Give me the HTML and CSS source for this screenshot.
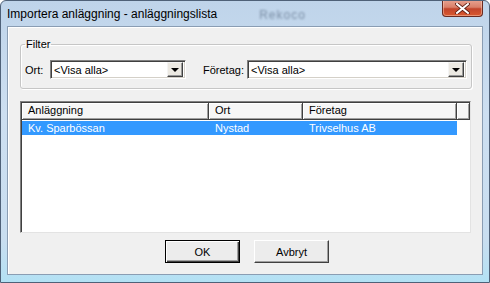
FILE: index.html
```html
<!DOCTYPE html>
<html>
<head>
    <title>Importera anläggning</title>
    <link rel="stylesheet" href="styles.css">
</head>
<body>
    <div class="window">
        <div class="titlebar">
            <span class="title">Importera anläggning - anläggningslista</span>
            <span class="ghost">Rekoco</span>
            <div class="close">
                <svg width="15" height="11" viewBox="0 0 15 11">
                    <path d="M2 1 L13 10 M13 1 L2 10" stroke="#5a1a10" stroke-width="3.6" stroke-linecap="square"/>
                    <path d="M2 1 L13 10 M13 1 L2 10" stroke="#fff" stroke-width="2" stroke-linecap="square"/>
                </svg>
            </div>
        </div>
        <div class="client">
            <fieldset class="filter">
                <legend>Filter</legend>
                <div class="filter-row">
                    <span class="lbl lbl-ort">Ort:</span>
                    <div class="combo combo-ort">
                        <span class="combo-text">&lt;Visa alla&gt;</span>
                        <span class="combo-btn"><span class="arrow"></span></span>
                    </div>
                    <span class="lbl lbl-foretag">Företag:</span>
                    <div class="combo combo-foretag">
                        <span class="combo-text">&lt;Visa alla&gt;</span>
                        <span class="combo-btn"><span class="arrow"></span></span>
                    </div>
                </div>
            </fieldset>
            <div class="list">
                <div class="list-head">
                    <div class="hcell col-1">Anläggning</div>
                    <div class="hcell col-2">Ort</div>
                    <div class="hcell col-3">Företag</div>
                    <div class="hcell col-fill"></div>
                </div>
                <div class="list-row selected">
                    <div class="cell col-1">Kv. Sparbössan</div>
                    <div class="cell col-2">Nystad</div>
                    <div class="cell col-3">Trivselhus AB</div>
                </div>
            </div>
            <div class="buttons">
                <div class="btn btn-default">OK</div>
                <div class="btn">Avbryt</div>
            </div>
        </div>
    </div>
</body>
</html>
```

FILE: styles.css
```css
body {
    margin: 0;
    background-color: #ffffff;
    font-family: "Liberation Sans", Arial, sans-serif;
    font-size: 11px;
    color: #000;
}

.window {
    width: 490px;
    height: 283px;
    box-sizing: border-box;
    border: 1px solid #4f6178;
    border-radius: 6px 6px 0 0;
    background: linear-gradient(to bottom, #bfd4ea 0%, #cddff1 40%, #c9def0 85%, #b3e1f4 100%);
    display: flex;
    flex-direction: column;
    overflow: hidden;
}

.titlebar {
    height: 25px;
    flex: none;
    display: flex;
    align-items: flex-start;
    position: relative;
}

.title {
    font-size: 12px;
    line-height: 15px;
    padding: 6px 0 0 6px;
    color: #000;
}

.ghost {
    margin: 7px 0 0 42px;
    font-size: 12px;
    letter-spacing: 1px;
    color: #7a8ea5;
    filter: blur(1.3px);
}

.close {
    position: absolute;
    top: -1px;
    right: 6px;
    width: 41px;
    height: 17px;
    box-sizing: border-box;
    border: 1px solid #6a2a20;
    border-top: none;
    border-radius: 0 0 4px 4px;
    background: linear-gradient(to bottom, #e8a391 0%, #d9806a 45%, #c2452c 55%, #d9592f 100%);
    box-shadow: inset 0 0 0 1px rgba(255, 220, 200, 0.45);
    display: flex;
    align-items: center;
    justify-content: center;
}

.client {
    flex: 1;
    margin: 0 6px 7px 6px;
    border: 1px solid #8a9db3;
    background-color: #f0f0f0;
    box-shadow: inset 1px 1px 0 #ffffff;
    padding: 0 10px 0 12px;
    display: flex;
    flex-direction: column;
}

.filter {
    margin: 11px 0 0 0;
    padding: 9px 4px 9px 4px;
    border: 1px solid #c6c6c6;
    border-radius: 3px;
    box-shadow: 1px 1px 0 #ffffff, inset 1px 1px 0 #ffffff;
    width: 452px;
    box-sizing: border-box;
}

.filter legend {
    padding: 0 1px;
    margin-left: 0;
    line-height: 13px;
}

.filter-row {
    display: flex;
    align-items: center;
}

.lbl-ort {
    width: 25px;
}

.lbl-foretag {
    width: 44px;
    margin-left: 17px;
}

.combo {
    height: 19px;
    box-sizing: border-box;
    border: 1px solid;
    border-color: #808080 #ffffff #ffffff #808080;
    box-shadow: inset 1px 1px 0 #404040, inset -1px -1px 0 #d4d0c8;
    background-color: #fff;
    display: flex;
    align-items: center;
    padding: 1px 2px 1px 2px;
}

.combo-ort {
    width: 136px;
}

.combo-foretag {
    width: 220px;
}

.combo-text {
    flex: 1;
    padding-left: 1px;
}

.combo-btn {
    width: 16px;
    height: 15px;
    box-sizing: border-box;
    background-color: #ece9e2;
    border: 1px solid;
    border-color: #f4f4f4 #404040 #404040 #f4f4f4;
    box-shadow: inset -1px -1px 0 #9a9a9a;
    display: flex;
    align-items: center;
    justify-content: center;
}

.arrow {
    width: 0;
    height: 0;
    border-left: 4px solid transparent;
    border-right: 4px solid transparent;
    border-top: 4px solid #000;
    margin-top: 1px;
}

.list {
    margin-top: 12px;
    width: 451px;
    height: 132px;
    box-sizing: border-box;
    border: 1px solid;
    border-color: #808080 #e3e3e3 #e3e3e3 #808080;
    box-shadow: inset 1px 1px 0 #404040;
    background-color: #fff;
    padding: 1px 0 0 1px;
}

.list-head {
    display: flex;
    height: 17px;
}

.hcell {
    box-sizing: border-box;
    height: 17px;
    line-height: 15px;
    padding-left: 6px;
    background-color: #f6f6f6;
    border-right: 1px solid #404040;
    border-bottom: 1px solid #404040;
    box-shadow: inset 1px 1px 0 #ffffff, inset -1px -1px 0 #a0a0a0;
    white-space: nowrap;
}

.col-1 {
    width: 187px;
}

.col-2 {
    width: 94px;
}

.col-3 {
    width: 154px;
}

.col-fill {
    flex: 1;
}

.list-row {
    display: flex;
    height: 14px;
    margin-top: 1px;
    line-height: 14px;
}

.cell {
    padding-left: 6px;
    box-sizing: border-box;
    white-space: nowrap;
}

.selected {
    width: 435px;
    background-color: #3399ff;
    color: #fff;
}

.buttons {
    display: flex;
    justify-content: center;
    gap: 14px;
    margin-top: 7px;
    padding-left: 2px;
}

.btn {
    width: 75px;
    height: 23px;
    box-sizing: border-box;
    background-color: #ececec;
    border: 1px solid;
    border-color: #ffffff #404040 #404040 #ffffff;
    box-shadow: inset -1px -1px 0 #a0a0a0;
    display: flex;
    align-items: center;
    justify-content: center;
}

.btn-default {
    border: 1px solid #000;
    box-shadow: inset 1px 1px 0 #ffffff, inset -1px -1px 0 #404040, inset -2px -2px 0 #a0a0a0;
}
```
